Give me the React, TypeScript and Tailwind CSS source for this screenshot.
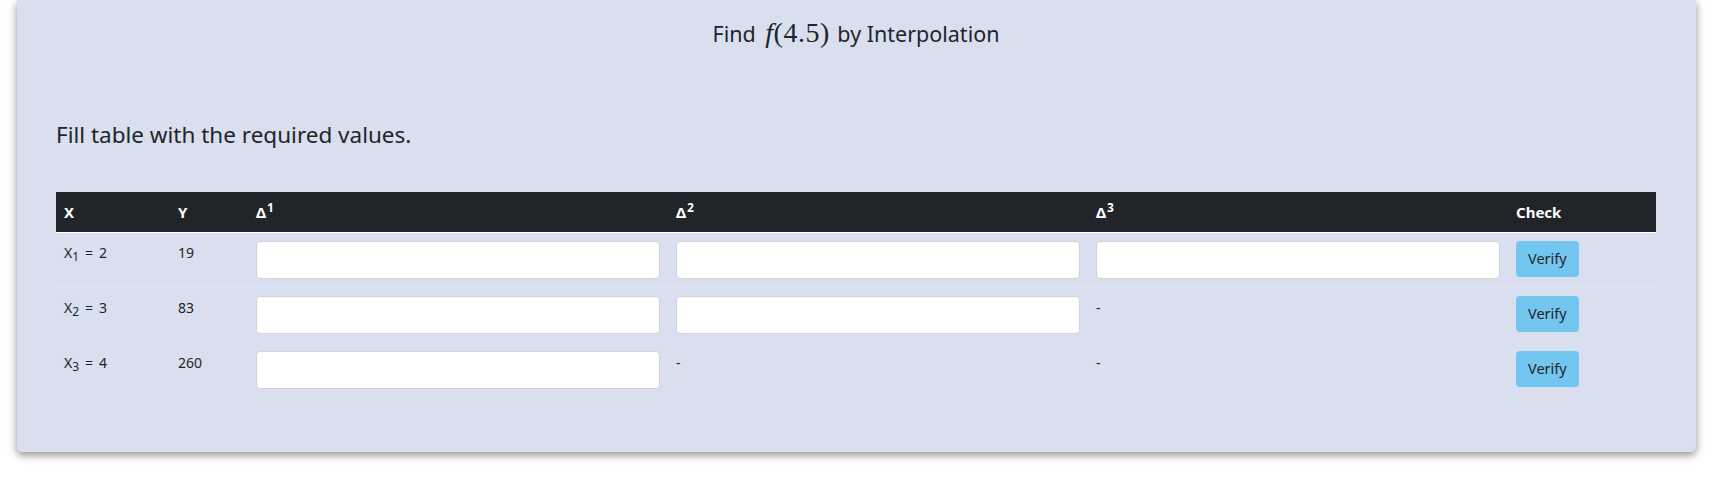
import React from 'react';

type Row = {
  sub: string;
  x: number;
  y: number;
  inputs: number; // how many delta inputs this row has
};

const rows: Row[] = [
  { sub: '1', x: 2, y: 19, inputs: 3 },
  { sub: '2', x: 3, y: 83, inputs: 2 },
  { sub: '3', x: 4, y: 260, inputs: 1 },
];

const font = { fontFamily: '"Noto Sans", "Open Sans", sans-serif' };

const Delta: React.FC<{ n: number }> = ({ n }) => (
  <span>
    Δ<sup className="text-[12px] font-bold ml-[1px] top-[-6px]">{n}</sup>
  </span>
);

const App: React.FC = () => {
  return (
    <div className="min-h-[481px] bg-white text-[#212529]" style={font}>
      <div className="ml-[17px] w-[1679px] bg-[#d9dfef] rounded-b-[5px] shadow-[0_3px_9px_rgba(0,0,0,0.45)] pt-[17px] pl-[39px] pr-[40px] pb-[54px]">
        <h2 className="text-center text-[21.5px] leading-[32px]">
          Find{' '}
          <span className="ml-[4px] mr-[2px] font-['Liberation_Serif',serif] text-[28px] leading-[32px] tracking-[0.5px]">
            <i>f</i>(4.5)
          </span>{' '}
          by Interpolation
        </h2>

        <p className="mt-[69px] text-[22.5px] leading-[32px]">Fill table with the required values.</p>

        <table className="mt-[41px] w-[1600px] table-fixed border-collapse text-[14px]">
          <colgroup>
            <col className="w-[114px]" />
            <col className="w-[78px]" />
            <col className="w-[420px]" />
            <col className="w-[420px]" />
            <col className="w-[420px]" />
            <col className="w-[148px]" />
          </colgroup>
          <thead>
            <tr className="bg-[#212529] text-white text-left border-b border-white text-[15px]">
              <th className="px-2 py-2 leading-6 font-bold">X</th>
              <th className="px-2 py-2 leading-6 font-bold">Y</th>
              <th className="px-2 py-2 leading-6 font-bold"><Delta n={1} /></th>
              <th className="px-2 py-2 leading-6 font-bold"><Delta n={2} /></th>
              <th className="px-2 py-2 leading-6 font-bold"><Delta n={3} /></th>
              <th className="px-2 py-2 leading-6 font-bold">Check</th>
            </tr>
          </thead>
          <tbody>
            {rows.map((r, i) => (
              <tr key={r.sub} className={i > 0 ? 'border-t border-[#e0e4ee]' : ''}>
                <td className="px-2 py-2 leading-6 align-top whitespace-nowrap">
                  X<sub className="text-[12px]">{r.sub}</sub>
                  <span className="mx-[6px]">=</span>
                  {r.x}
                </td>
                <td className="px-2 py-2 leading-6 align-top">{r.y}</td>
                {[0, 1, 2].map((c) => (
                  <td key={c} className="px-2 py-2 leading-6 align-top">
                    {c < r.inputs ? (
                      <input
                        type="text"
                        className="block w-full h-[38px] rounded-[4px] border border-[#ced4da] bg-white px-3 text-[14px] focus:outline-none"
                      />
                    ) : (
                      <span>-</span>
                    )}
                  </td>
                ))}
                <td className="px-2 py-2 align-top">
                  <button className="h-[36px] px-3 rounded-[4px] bg-[#73c6ef] text-[14.5px] text-[#212529]">
                    Verify
                  </button>
                </td>
              </tr>
            ))}
            <tr className="border-t border-[#e0e4ee]">
              <td colSpan={6} className="h-0 p-0" />
            </tr>
          </tbody>
        </table>
      </div>
    </div>
  );
};

export default App;
